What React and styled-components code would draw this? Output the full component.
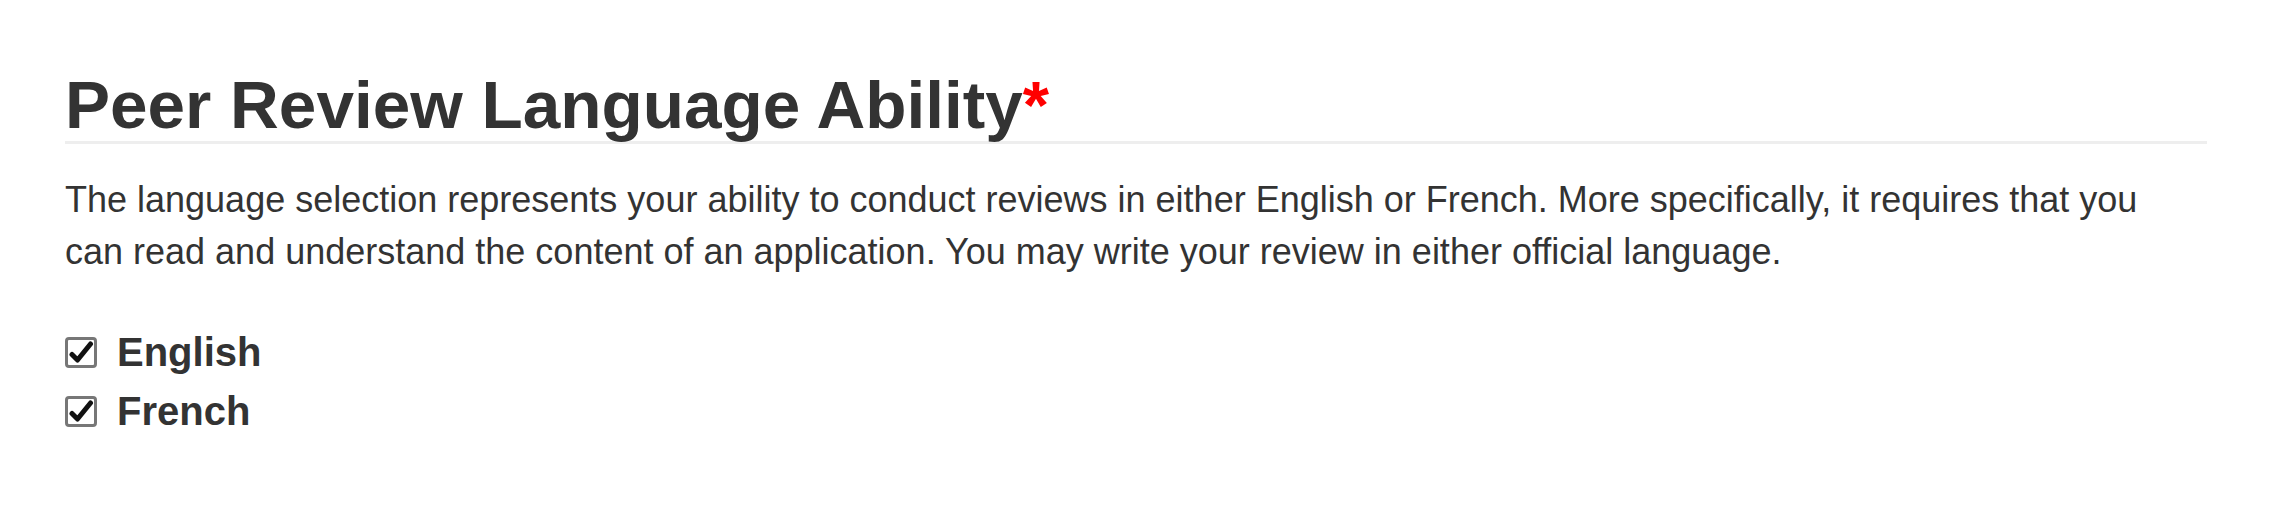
import React from "react";
import styled, { createGlobalStyle } from "styled-components";

const GlobalStyle = createGlobalStyle`
  html, body {
    margin: 0;
    padding: 0;
    background: #ffffff;
  }
  body {
    font-family: "Liberation Sans", Arial, sans-serif;
    color: #333333;
  }
`;

const languages = ["English", "French"];

const App = () => {
  return (
    <>
      <GlobalStyle />
      <Section>
        <Heading>
          Peer Review Language Ability<Required>*</Required>
        </Heading>
        <Description>
          The language selection represents your ability to conduct reviews in
          either English or French. More specifically, it requires that you can
          read and understand the content of an application. You may write your
          review in either official language.
        </Description>
        <Options>
          {languages.map((lang) => (
            <Option key={lang}>
              <Box>
                <svg width="26" height="25" viewBox="0 0 26 25">
                  <path
                    d="M4 14.5 L9.5 20 L22.5 4"
                    fill="none"
                    stroke="#111"
                    strokeWidth="5"
                    strokeLinecap="round"
                    strokeLinejoin="round"
                  />
                </svg>
              </Box>
              <OptionLabel>{lang}</OptionLabel>
            </Option>
          ))}
        </Options>
      </Section>
    </>
  );
};

const Section = styled.div`
  width: 2142px;
  padding: 69px 0 0 65px;
`;

const Heading = styled.h2`
  margin: 0;
  font-size: 67.5px;
  line-height: 72px;
  font-weight: 700;
  color: #333333;
  border-bottom: 3px solid #eeeeee;
`;

const Required = styled.span`
  color: #ff0000;
`;

const Description = styled.p`
  max-width: 2110px;
  margin: 30px 0 0;
  font-size: 36px;
  line-height: 52px;
  color: #333333;
`;

const Options = styled.div`
  margin-top: 45px;
  display: flex;
  flex-direction: column;
`;

const Option = styled.label`
  display: flex;
  align-items: center;
  gap: 20px;
  height: 59px;
`;

const Box = styled.span`
  box-sizing: border-box;
  width: 32px;
  height: 31px;
  border: 3px solid #777777;
  border-radius: 4px;
  display: flex;
  align-items: center;
  justify-content: center;
`;

const OptionLabel = styled.span`
  font-size: 40px;
  font-weight: 700;
  color: #333333;
`;

export default App;
